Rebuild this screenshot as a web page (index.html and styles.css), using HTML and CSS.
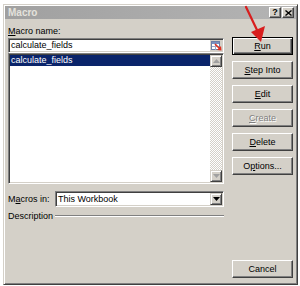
FILE: index.html
```html
<!DOCTYPE html>
<html lang="en">
<head>
    <meta charset="UTF-8">
    <meta name="viewport" content="width=device-width, initial-scale=1.0">
    <title>Macro</title>
    <link rel="stylesheet" href="styles.css">
</head>
<body>
    <div class="window">
        <div class="titlebar">
            <span class="title">Macro</span>
            <div class="caption-buttons">
                <span class="cap-btn">?</span>
                <span class="cap-btn">
                    <svg width="7" height="6" viewBox="0 0 7 6"><path d="M0.5 0.5 L6.5 5.5 M6.5 0.5 L0.5 5.5" stroke="#000" stroke-width="1.4"/></svg>
                </span>
            </div>
        </div>

        <div class="content">
            <div class="left">
                <div class="label"><u>M</u>acro name:</div>
                <div class="field name-field">
                    <span class="field-text">calculate_fields</span>
                    <span class="refedit">
                        <svg width="11" height="10" viewBox="0 0 11 10">
                            <rect x="0.5" y="0.5" width="8" height="8" fill="#fff" stroke="#6b7fa8"/>
                            <rect x="1" y="1" width="7" height="2" fill="#7890c0"/>
                            <path d="M1 5.5 H8 M4.5 3 V9" stroke="#9aa8c8" stroke-width="1"/>
                            <path d="M4 3 L9 8" stroke="#e03020" stroke-width="1.6"/>
                            <path d="M10.5 9.5 L6 9 L10 5 Z" fill="#e03020"/>
                        </svg>
                    </span>
                </div>
                <div class="field listbox">
                    <div class="items">
                        <div class="item selected">calculate_fields</div>
                    </div>
                    <div class="scrollbar">
                        <span class="sb-btn">
                            <svg width="7" height="4" viewBox="0 0 7 4"><path d="M0 4 L3.5 0 L7 4 Z" fill="#a0a0a0"/></svg>
                        </span>
                        <span class="sb-track"></span>
                        <span class="sb-btn">
                            <svg width="7" height="4" viewBox="0 0 7 4"><path d="M0 0 L7 0 L3.5 4 Z" fill="#a0a0a0"/></svg>
                        </span>
                    </div>
                </div>

                <div class="macros-in">
                    <span class="label row-label">M<u>a</u>cros in:</span>
                    <div class="field combo">
                        <span class="field-text">This Workbook</span>
                        <span class="combo-btn">
                            <svg width="7" height="4" viewBox="0 0 7 4"><path d="M0 0 L7 0 L3.5 4 Z" fill="#000"/></svg>
                        </span>
                    </div>
                </div>

                <div class="description">
                    <span class="label row-label">Description</span>
                    <span class="rule"></span>
                </div>
            </div>

            <div class="right">
                <div class="button default"><span><u>R</u>un</span></div>
                <div class="button"><span><u>S</u>tep Into</span></div>
                <div class="button"><span><u>E</u>dit</span></div>
                <div class="button disabled"><span><u>C</u>reate</span></div>
                <div class="button"><span><u>D</u>elete</span></div>
                <div class="button"><span>O<u>p</u>tions...</span></div>
                <div class="button cancel"><span>Cancel</span></div>
            </div>
        </div>
    </div>

    <svg class="arrow" width="300" height="50" viewBox="0 0 300 50">
        <path d="M246 7 L257 30" stroke="#d81e1e" stroke-width="2.2" stroke-linecap="round"/>
        <path d="M251 32 L265 26 L261 42 Z" fill="#d81e1e"/>
    </svg>
</body>
</html>
```

FILE: styles.css
```css
* {
    margin: 0;
    padding: 0;
    box-sizing: border-box;
}
body {
    position: relative;
    width: 300px;
    height: 286px;
    overflow: hidden;
    background: #fff;
    font-family: 'Liberation Sans', Arial, sans-serif;
    font-size: 9px;
    color: #000;
}
u {
    text-decoration: underline;
    text-underline-offset: 1px;
}
.window {
    display: flex;
    flex-direction: column;
    width: 295px;
    height: 281px;
    margin: 4px 0 0 3px;
    background: #d4d0c8;
    border: 1px solid;
    border-color: #d4d0c8 #404040 #404040 #d4d0c8;
    box-shadow: inset 1px 1px #fff, inset -1px -1px #808080;
    padding: 1px;
}
.titlebar {
    display: flex;
    align-items: center;
    justify-content: space-between;
    height: 13px;
    padding: 0 2px 0 3px;
    background: linear-gradient(to right, #a0a0a0, #b4b4b4);
}
.title {
    color: #e4e2dc;
    font-weight: bold;
    font-size: 10px;
}
.caption-buttons {
    display: flex;
    gap: 1px;
}
.cap-btn {
    display: flex;
    align-items: center;
    justify-content: center;
    width: 12px;
    height: 11px;
    background: #d4d0c8;
    border: 1px solid;
    border-color: #fff #404040 #404040 #fff;
    box-shadow: inset -1px -1px #808080;
    font-weight: bold;
    font-size: 9px;
    line-height: 9px;
}
.content {
    flex: 1;
    display: grid;
    grid-template-columns: 216px 61px;
    column-gap: 8px;
    padding: 6px 3px 5px 3px;
}
.left {
    display: flex;
    flex-direction: column;
}
.label {
    height: 12px;
    line-height: 12px;
    margin-bottom: 1px;
}
.field {
    background: #fff;
    border: 1px solid;
    border-color: #808080 #fff #fff #808080;
    box-shadow: inset 1px 1px #404040, inset -1px -1px #d4d0c8;
    padding: 1px;
}
.name-field {
    display: flex;
    align-items: center;
    justify-content: space-between;
    height: 15px;
}
.field-text {
    padding-left: 1px;
    line-height: 11px;
}
.refedit {
    display: flex;
    align-items: center;
    justify-content: center;
    width: 12px;
    height: 11px;
    background: #d4d0c8;
}
.listbox {
    display: flex;
    height: 131px;
}
.items {
    flex: 1;
}
.item {
    height: 11px;
    line-height: 11px;
    padding-left: 1px;
}
.item.selected {
    background: #0a246a;
    color: #fff;
}
.scrollbar {
    display: flex;
    flex-direction: column;
    width: 12px;
}
.sb-btn {
    display: flex;
    align-items: center;
    justify-content: center;
    height: 12px;
    background: #d4d0c8;
    border: 1px solid;
    border-color: #d4d0c8 #404040 #404040 #d4d0c8;
    box-shadow: inset 1px 1px #fff, inset -1px -1px #808080;
}
.sb-track {
    flex: 1;
    background: repeating-conic-gradient(#fff 0 25%, #d4d0c8 0 50%) 0 0 / 2px 2px;
}
.macros-in {
    display: flex;
    align-items: center;
    margin-top: 7px;
    height: 16px;
}
.row-label {
    width: 47px;
    margin-bottom: 0;
}
.combo {
    flex: 1;
    display: flex;
    align-items: center;
    justify-content: space-between;
    height: 16px;
}
.combo-btn {
    display: flex;
    align-items: center;
    justify-content: center;
    width: 12px;
    height: 12px;
    background: #d4d0c8;
    border: 1px solid;
    border-color: #d4d0c8 #404040 #404040 #d4d0c8;
    box-shadow: inset 1px 1px #fff, inset -1px -1px #808080;
}
.description {
    display: flex;
    align-items: center;
    margin-top: 3px;
    height: 12px;
}
.rule {
    flex: 1;
    height: 2px;
    border-top: 1px solid #808080;
    border-bottom: 1px solid #fff;
}
.right {
    display: flex;
    flex-direction: column;
    gap: 6px;
    padding-top: 12px;
}
.button {
    display: flex;
    align-items: center;
    justify-content: center;
    height: 18px;
    background: #d4d0c8;
    border: 1px solid;
    border-color: #fff #404040 #404040 #fff;
    box-shadow: inset -1px -1px #808080;
}
.button.default {
    border: 1px solid #000;
    box-shadow: inset 1px 1px #fff, inset -1px -1px #404040, inset -2px -2px #808080;
}
.button.disabled {
    color: #808080;
    text-shadow: 1px 1px #fff;
}
.button.cancel {
    margin-top: auto;
}
.arrow {
    position: absolute;
    top: 0;
    left: 0;
    pointer-events: none;
}
```
